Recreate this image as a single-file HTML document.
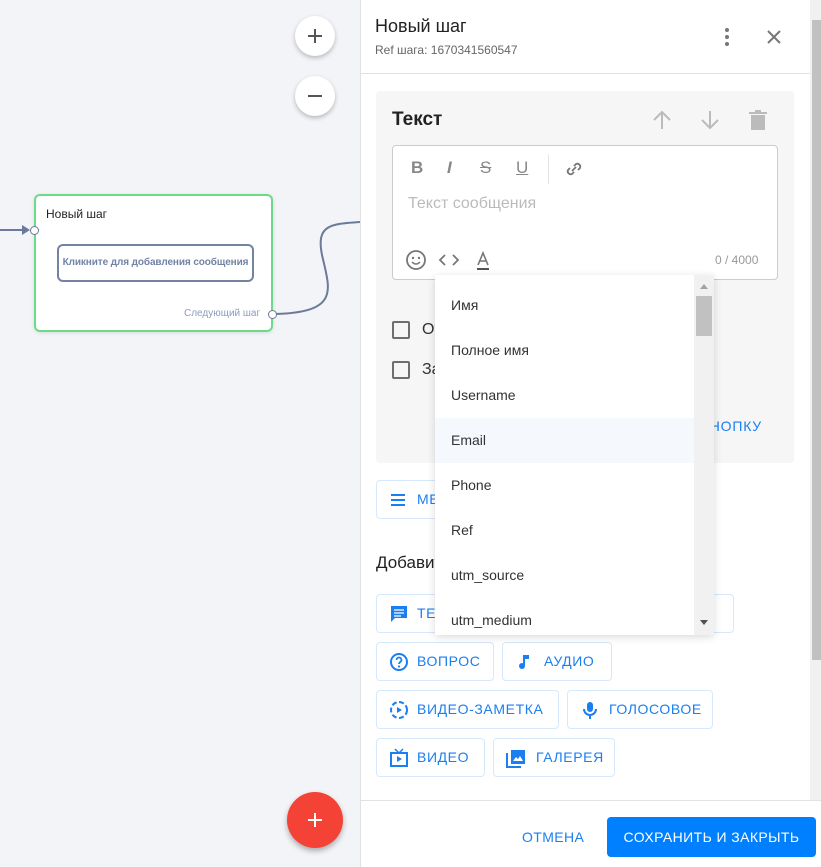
<!DOCTYPE html>
<html><head><meta charset="utf-8">
<style>
*{box-sizing:border-box;margin:0;padding:0}
body{width:821px;height:867px;overflow:hidden;position:relative;font-family:"Liberation Sans","DejaVu Sans",sans-serif;background:#f3f4f7}
.abs{position:absolute}
.zb{position:absolute;width:40px;height:40px;border-radius:50%;background:#fff;box-shadow:0 2px 5px rgba(0,0,0,.25);left:295px}
.btn{position:absolute;height:39px;border:1px solid #d6e8fb;border-radius:4px;background:#fff;color:#1a7ff0;font-size:14px;letter-spacing:.6px;line-height:37px;padding-left:40px;white-space:nowrap}
.btn svg{position:absolute;left:12px;top:9px}
.item{position:absolute;left:0;width:259px;height:45px;line-height:45px;padding-left:16px;font-size:14px;color:#333}
.cb{position:absolute;left:392px;width:18px;height:18px;border:2px solid #6e6e6e;border-radius:2px}
</style></head><body>
<div class="zb" style="top:16px"><svg width="40" height="40"><path d="M13 20h14M20 13v14" stroke="#555" stroke-width="2"/></svg></div>
<div class="zb" style="top:76px"><svg width="40" height="40"><path d="M13 20h14" stroke="#555" stroke-width="2"/></svg></div>
<svg class="abs" style="left:0;top:180px" width="360" height="160">
<path d="M0 50H28" stroke="#6b7a99" stroke-width="2" fill="none"/><path d="M22 45l8 5-8 5z" fill="#6b7a99"/>
<path d="M276 134C340 132 330 110 322 75C316 45 330 44 360 42" stroke="#6b7a99" stroke-width="2" fill="none"/>
</svg>
<div class="abs" style="left:34px;top:194px;width:239px;height:138px;background:#fff;border:2px solid #6fd98a;border-radius:6px;box-shadow:0 1px 4px rgba(0,0,0,.1)"></div>
<div class="abs" style="left:46px;top:207px;font-size:12px;color:#222">Новый шаг</div>
<div class="abs" style="left:57px;top:244px;width:197px;height:38px;border:2px solid #7384a3;border-radius:6px;font-size:10px;font-weight:bold;color:#7384a3;text-align:center;line-height:34px;white-space:nowrap;letter-spacing:-.1px">Кликните для добавления сообщения</div>
<div class="abs" style="left:184px;top:308px;font-size:10px;color:#8b9bc0">Следующий шаг</div>
<div class="abs" style="left:30px;top:226px;width:9px;height:9px;border-radius:50%;background:#fff;border:1px solid #6b7a99"></div>
<div class="abs" style="left:268px;top:310px;width:9px;height:9px;border-radius:50%;background:#fff;border:1px solid #6b7a99"></div>
<div class="abs" style="left:287px;top:792px;width:56px;height:56px;border-radius:50%;background:#f44336;box-shadow:0 3px 6px rgba(0,0,0,.3)"><svg width="56" height="56"><path d="M21 28h14M28 21v14" stroke="#fff" stroke-width="2"/></svg></div>
<div class="abs" style="left:360px;top:0;width:461px;height:867px;background:#fff;border-left:1px solid #e2e2e2"></div>
<div class="abs" style="left:375px;top:16px;font-size:18px;color:#222">Новый шаг</div>
<div class="abs" style="left:375px;top:43px;font-size:12px;color:#666">Ref шага: 1670341560547</div>
<svg class="abs" style="left:720px;top:26px" width="14" height="22"><circle cx="7" cy="4" r="2" fill="#777"/><circle cx="7" cy="11" r="2" fill="#777"/><circle cx="7" cy="18" r="2" fill="#777"/></svg>
<svg class="abs" style="left:766px;top:29px" width="16" height="16"><path d="M2 2L14 14M14 2L2 14" stroke="#777" stroke-width="2"/></svg>
<div class="abs" style="left:361px;top:73px;width:449px;height:1px;background:#e2e2e2"></div>
<div class="abs" style="left:810px;top:0;width:11px;height:800px;background:#f1f1f1"></div>
<div class="abs" style="left:812px;top:20px;width:9px;height:640px;background:#c1c1c1"></div>
<div class="abs" style="left:376px;top:91px;width:418px;height:372px;background:#f6f6f6;border-radius:4px"></div>
<div class="abs" style="left:392px;top:109px;font-size:19px;font-weight:bold;color:#222">Текст</div>
<svg class="abs" style="left:650px;top:109px" width="120" height="22">
<path d="M12 20V3M4 11l8-8 8 8" stroke="#bbb" stroke-width="2" fill="none"/>
<path d="M60 2v17M52 11l8 8 8-8" stroke="#bbb" stroke-width="2" fill="none"/>
<path d="M101 6h14v15h-14z" fill="#bbb"/><path d="M99 3h18v2h-18zM105 1h6v2h-6z" fill="#bbb"/>
</svg>
<div class="abs" style="left:392px;top:145px;width:386px;height:135px;background:#fff;border:1px solid #ccc;border-radius:4px"></div>
<div class="abs" style="left:411px;top:158px;font-size:17px;font-weight:bold;color:#888">B</div>
<div class="abs" style="left:447px;top:158px;font-size:17px;font-weight:bold;font-style:italic;color:#888">I</div>
<div class="abs" style="left:480px;top:158px;font-size:17px;color:#888;text-decoration:line-through">S</div>
<div class="abs" style="left:516px;top:158px;font-size:17px;color:#888;text-decoration:underline">U</div>
<div class="abs" style="left:548px;top:154px;width:1px;height:30px;background:#e5e5e5"></div>
<svg class="abs" style="left:564px;top:159px" width="20" height="20"><path d="M8 12l4-4M6 9l-2 2a3 3 0 004 4l2-2M10 7l2-2a3 3 0 014 4l-2 2" stroke="#777" stroke-width="1.8" fill="none"/></svg>
<div class="abs" style="left:408px;top:195px;font-size:16px;color:#bbb">Текст сообщения</div>
<svg class="abs" style="left:405px;top:248px" width="90" height="24">
<circle cx="11" cy="12" r="9" stroke="#777" stroke-width="1.8" fill="none"/><circle cx="8" cy="10" r="1.2" fill="#777"/><circle cx="14" cy="10" r="1.2" fill="#777"/><path d="M7 14q4 4 8 0" stroke="#777" stroke-width="1.5" fill="none"/>
<path d="M40 7l-5 5 5 5M48 7l5 5-5 5" stroke="#777" stroke-width="1.8" fill="none"/>
<path d="M73 17l5-12 5 12M75 13h6" stroke="#777" stroke-width="1.6" fill="none"/><path d="M72 21h12" stroke="#555" stroke-width="2"/>
</svg>
<div class="abs" style="left:715px;top:253px;font-size:12px;color:#999">0 / 4000</div>
<div class="cb" style="top:321px"></div>
<div class="cb" style="top:361px"></div>
<div class="abs" style="left:422px;top:321px;font-size:16px;color:#333">Отключить</div>
<div class="abs" style="left:422px;top:361px;font-size:16px;color:#333">Защитить</div>
<div class="abs" style="right:59px;top:418px;font-size:14px;color:#1a7ff0;letter-spacing:.8px">ДОБАВИТЬ КНОПКУ</div>
<div class="btn" style="left:376px;top:480px;width:180px"><svg width="18" height="20"><path d="M2 5h14M2 10h14M2 15h14" stroke="#1a7ff0" stroke-width="2"/></svg>МЕНЮ</div>
<div class="abs" style="left:376px;top:553px;font-size:17px;color:#222">Добавить блок</div>
<div class="btn" style="left:376px;top:594px;width:358px"><svg width="20" height="20"><path d="M2 2h16v12H6l-4 4z" fill="#1a7ff0"/><path d="M5 6h10M5 9h10M5 12h7" stroke="#fff" stroke-width="1.3"/></svg>ТЕКСТ</div>
<div class="btn" style="left:376px;top:642px;width:118px"><svg width="20" height="20"><circle cx="10" cy="10" r="8" stroke="#1a7ff0" stroke-width="2" fill="none"/><path d="M7.5 8a2.5 2.5 0 115 0c0 2-2.5 2-2.5 4" stroke="#1a7ff0" stroke-width="1.8" fill="none"/><circle cx="10" cy="14.5" r="1.1" fill="#1a7ff0"/></svg>ВОПРОС</div>
<div class="btn" style="left:502px;top:642px;width:110px;padding-left:41px"><svg width="20" height="20"><path d="M9 3v10" stroke="#1a7ff0" stroke-width="2"/><circle cx="7" cy="14" r="3" fill="#1a7ff0"/><path d="M9 3h5v4H9z" fill="#1a7ff0"/></svg>АУДИО</div>
<div class="btn" style="left:376px;top:690px;width:183px"><svg width="20" height="20"><circle cx="10" cy="10" r="8" stroke="#1a7ff0" stroke-width="2" fill="none" stroke-dasharray="5 2.5"/><path d="M8 7l5 3-5 3z" fill="#1a7ff0"/></svg>ВИДЕО-ЗАМЕТКА</div>
<div class="btn" style="left:567px;top:690px;width:146px;padding-left:41px"><svg width="20" height="20"><rect x="7" y="2" width="6" height="10" rx="3" fill="#1a7ff0"/><path d="M4 9a6 6 0 0012 0M10 15v4" stroke="#1a7ff0" stroke-width="2" fill="none"/></svg>ГОЛОСОВОЕ</div>
<div class="btn" style="left:376px;top:738px;width:109px"><svg width="20" height="20"><rect x="2" y="5" width="16" height="13" stroke="#1a7ff0" stroke-width="2" fill="none"/><path d="M6 1l4 4 4-4" stroke="#1a7ff0" stroke-width="1.5" fill="none"/><path d="M8 8l5 3-5 3z" fill="#1a7ff0"/></svg>ВИДЕО</div>
<div class="btn" style="left:493px;top:738px;width:122px;padding-left:42px"><svg width="20" height="20"><path d="M5 2h14v14H5z" fill="#1a7ff0"/><path d="M1 5v14h14" stroke="#1a7ff0" stroke-width="2" fill="none"/><path d="M7 13l3-4 2 2 2-3 3 5z" fill="#fff"/></svg>ГАЛЕРЕЯ</div>
<div class="abs" style="left:361px;top:800px;width:460px;height:1px;background:#e2e2e2"></div>
<div class="abs" style="left:522px;top:829px;font-size:14px;color:#1a7ff0;letter-spacing:.4px">ОТМЕНА</div>
<div class="abs" style="left:607px;top:817px;width:209px;height:40px;background:#0080ff;border-radius:4px;color:#fff;font-size:14px;letter-spacing:.4px;text-align:center;line-height:40px">СОХРАНИТЬ И ЗАКРЫТЬ</div>
<div class="abs" style="left:435px;top:275px;width:279px;height:360px;background:#fff;box-shadow:0 2px 8px rgba(0,0,0,.15);overflow:hidden">
<div class="item" style="top:8px">Имя</div>
<div class="item" style="top:53px">Полное имя</div>
<div class="item" style="top:98px">Username</div>
<div class="item" style="top:143px;background:#f5f9fe">Email</div>
<div class="item" style="top:188px">Phone</div>
<div class="item" style="top:233px">Ref</div>
<div class="item" style="top:278px">utm_source</div>
<div class="item" style="top:323px">utm_medium</div>
<div class="abs" style="left:259px;top:0;width:20px;height:360px;background:#f1f1f1"></div>
<div class="abs" style="left:261px;top:21px;width:16px;height:40px;background:#c1c1c1"></div>
<svg class="abs" style="left:259px;top:0" width="20" height="360"><path d="M6 14l4-5 4 5z" fill="#a3a3a3"/><path d="M6 345l4 5 4-5z" fill="#505050"/></svg>
</div>
</body></html>
